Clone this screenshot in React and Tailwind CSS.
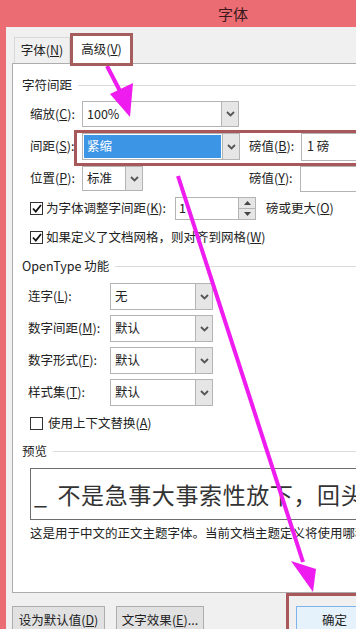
import React from 'react';

// dropdown chevron
const Chevron = () => (
  <svg width="9" height="6" viewBox="0 0 9 6">
    <polyline points="1,1 4.5,4.5 8,1" fill="none" stroke="#555" strokeWidth="1.8" />
  </svg>
);

const Combo = ({ className, value, selected }) => (
  <div className={`flex border border-[#b4b4b4] bg-white ${className}`}>
    <div className="flex-1 flex items-stretch p-[1px]">
      <div
        className={`flex-1 flex items-center pl-[3px] ${
          selected ? 'bg-[#3d95e6] text-white' : 'text-[#222]'
        }`}
      >
        {value}
      </div>
    </div>
    <div className="w-[17px] flex items-center justify-center border-l border-[#b4b4b4] bg-[#e6e6e6]">
      <Chevron />
    </div>
  </div>
);

const Key = ({ label, k, rest = '):' }) => (
  <span>
    {label}(<u>{k}</u>{rest}
  </span>
);

const Check = ({ checked }) => (
  <div className="w-[13px] h-[13px] border border-[#333] bg-white flex items-center justify-center shrink-0">
    {checked && (
      <svg width="10" height="9" viewBox="0 0 10 9">
        <polyline points="1,4.5 3.8,7.5 9,1" fill="none" stroke="#111" strokeWidth="1.8" />
      </svg>
    )}
  </div>
);

const Header = ({ text, className }) => (
  <div className={`flex items-center h-[16px] pl-[9px] ${className}`}>
    <span className="text-[#222]">{text}</span>
    <div className="flex-1 h-px bg-[#dcdcdc] ml-[6px]" />
  </div>
);

const openTypeRows = [
  { label: '连字', k: 'L', value: '无' },
  { label: '数字间距', k: 'M', value: '默认' },
  { label: '数字形式', k: 'F', value: '默认' },
  { label: '样式集', k: 'T', value: '默认' },
];

export default function App() {
  return (
    <div className="relative w-[356px] h-[629px] overflow-hidden bg-[#ec6c74] flex flex-col font-['Noto_Sans_CJK_SC','Noto_Sans',sans-serif] text-[12.5px] text-[#222] leading-none">
      {/* title bar */}
      <div className="h-[27px] shrink-0 flex items-center pl-[218px] text-[15px] text-[#3a1a1c]">
        字体
      </div>

      <div className="flex-1 flex">
        <div className="w-[6px] shrink-0" />
        <div className="flex-1 bg-[#f0f0f0] pl-[6px] flex flex-col">
          {/* tabs */}
          <div className="h-[36px] shrink-0 flex items-end pl-[2px]">
            <div className="w-[56px] h-[26px] border border-b-0 border-[#d9d9d9] bg-[#f0f0f0] flex items-center justify-center">
              <Key label="字体" k="N" rest=")" />
            </div>
            <div className="relative z-10 w-[63px] h-[33px] -mb-[3px] border-[3px] border-[#a65d5d] bg-white flex items-center justify-center">
              <Key label="高级" k="V" rest=")" />
            </div>
          </div>

          {/* panel */}
          <div className="w-[420px] h-[530px] shrink-0 border border-[#adadad] bg-white flex flex-col">
            <Header text="字符间距" className="mt-[13px]" />

            <div className="mt-[8px] h-[26px] flex items-center">
              <div className="ml-[17px] w-[52px]"><Key label="缩放" k="C" /></div>
              <Combo className="w-[157px] h-[26px]" value="100%" />
            </div>

            <div className="mt-[6px] h-[27px] flex items-center">
              <div className="ml-[17px] w-[52px]"><Key label="间距" k="S" /></div>
              <Combo className="w-[158px] h-[27px]" value="紧缩" selected />
              <div className="ml-[9px] w-[52px]"><Key label="磅值" k="B" /></div>
              <div className="w-[120px] h-[28px] border border-[#b4b4b4] bg-white flex items-center pl-[5px]">
                1 磅
              </div>
            </div>

            <div className="mt-[6px] h-[25px] flex items-center">
              <div className="ml-[17px] w-[52px]"><Key label="位置" k="P" /></div>
              <Combo className="w-[61px] h-[25px]" value="标准" />
              <div className="ml-[106px] w-[51px]"><Key label="磅值" k="Y" /></div>
              <div className="w-[120px] h-[26px] border border-[#b4b4b4] bg-white" />
            </div>

            <div className="mt-[6px] h-[23px] flex items-center">
              <div className="ml-[17px]"><Check checked /></div>
              <div className="ml-[3px] w-[129px]"><Key label="为字体调整字间距" k="K" /></div>
              <div className="w-[64px] h-[23px] border border-[#b4b4b4] bg-white flex items-center pl-[3px]">1</div>
              <div className="w-[17px] h-[23px] flex flex-col border border-l-0 border-[#b4b4b4]">
                <div className="flex-1 bg-[#e6e6e6] border-b border-[#b4b4b4] flex items-center justify-center">
                  <svg width="7" height="4" viewBox="0 0 7 4"><polygon points="0,4 3.5,0 7,4" fill="#444" /></svg>
                </div>
                <div className="flex-1 bg-[#e6e6e6] flex items-center justify-center">
                  <svg width="7" height="4" viewBox="0 0 7 4"><polygon points="0,0 3.5,4 7,0" fill="#444" /></svg>
                </div>
              </div>
              <div className="ml-[10px]"><Key label="磅或更大" k="O" rest=")" /></div>
            </div>

            <div className="mt-[6px] h-[23px] flex items-center">
              <div className="ml-[17px]"><Check checked /></div>
              <div className="ml-[3px]"><Key label="如果定义了文档网格，则对齐到网格" k="W" rest=")" /></div>
            </div>

            <Header text="OpenType 功能" className="mt-[9px]" />

            {openTypeRows.map((r, i) => (
              <div key={r.k} className={`h-[27px] flex items-center ${i === 0 ? 'mt-[9px]' : 'mt-[5px]'}`}>
                <div className="ml-[15px] w-[82px]"><Key label={r.label} k={r.k} /></div>
                <Combo className="w-[103px] h-[27px]" value={r.value} />
              </div>
            ))}

            <div className="mt-[9px] h-[16px] flex items-center">
              <div className="ml-[17px]"><Check /></div>
              <div className="ml-[5px]"><Key label="使用上下文替换" k="A" rest=")" /></div>
            </div>

            <Header text="预览" className="mt-[12px]" />

            <div className="mt-[9px] ml-[17px] h-[52px] border border-[#6d6d6d] flex items-center pl-[3px] text-[23px] tracking-[0.6px] text-[#333] whitespace-nowrap overflow-hidden">
              <span className="mr-[10px]">_</span>不是急事大事索性放下，回头再说
            </div>

            <div className="mt-[5px] ml-[17px] h-[16px] flex items-center whitespace-nowrap">
              这是用于中文的正文主题字体。当前文档主题定义将使用哪种字体。
            </div>
          </div>

          {/* buttons */}
          <div className="mt-[13px] flex whitespace-nowrap">
            <div className="w-[93px] h-[28px] border border-[#adadad] bg-[#e1e1e1] flex items-center justify-center">
              <Key label="设为默认值" k="D" rest=")" />
            </div>
            <div className="ml-[11px] w-[88px] h-[28px] border border-[#adadad] bg-[#e1e1e1] flex items-center justify-center">
              <Key label="文字效果" k="E" rest=")..." />
            </div>
            <div className="ml-[92px] w-[75px] h-[28px] border border-[#7eb4ea] bg-[#e5f1fb] flex items-center pl-[25px]">
              确定
            </div>
          </div>
        </div>
      </div>

      {/* annotation boxes */}
      <div className="absolute left-[74px] top-[130px] w-[300px] h-[36px] border-[3px] border-[#a8585a]" />
      <div className="absolute left-[286px] top-[593px] w-[90px] h-[60px] border-[3px] border-[#a8585a]" />

      {/* annotation arrows */}
      <svg className="absolute left-0 top-0 pointer-events-none" width="356" height="629" viewBox="0 0 356 629">
        <line x1="107" y1="66" x2="121" y2="93" stroke="#ee1cee" strokeWidth="4" />
        <polygon points="110,94 133,83 130,117" fill="#ee1cee" />
        <line x1="178" y1="176" x2="303" y2="562" stroke="#ee1cee" strokeWidth="4" />
        <polygon points="291,561 316,569 313,592" fill="#ee1cee" />
      </svg>
    </div>
  );
}
